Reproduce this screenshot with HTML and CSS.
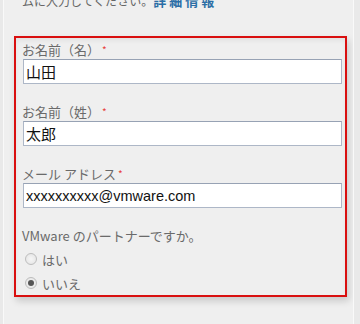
FILE: index.html
```html
<html><head>
  <title>パートナー登録</title>
  <link rel="stylesheet" href="styles.css">
</head>
<body>
<div class="frame">
  <p class="intro">ムに入力してください。<a href="#" class="more">詳細情報</a></p>

  <form class="box">
    <div class="field">
      <label for="firstName">お名前（名）<span class="req">*</span></label>
      <input type="text" id="firstName" class="cjk" value="山田">
    </div>

    <div class="field">
      <label for="lastName">お名前（姓）<span class="req">*</span></label>
      <input type="text" id="lastName" class="cjk" value="太郎">
    </div>

    <div class="field">
      <label for="email">メール アドレス<span class="req">*</span></label>
      <input type="text" id="email" class="mail" value="xxxxxxxxxx@vmware.com">
    </div>

    <div class="question">VMware のパートナーですか。</div>
    <label class="choice"><input type="radio" name="partner" value="yes"> はい</label>
    <label class="choice"><input type="radio" name="partner" value="no" checked> いいえ</label>
  </form>
</div>
</body></html>
```

FILE: styles.css
```css
body {
  margin: 0;
  background-color: #e9e9e9;
  font-family: "Noto Sans CJK JP", "Noto Sans", sans-serif;
  color: #6a6a6a;
}

.frame {
  margin-left: 3px;
  margin-right: 6px;
  min-height: 324px;
  background-color: #efefef;
  border-left: 1px solid #f9f9f9;
  border-right: 1px solid #f9f9f9;
  padding: 0 6px 0 10px;
  overflow: hidden;
}

.intro {
  margin: -7px 0 0 8px;
  font-size: 12px;
  line-height: 16px;
  color: #666;
  height: 43px;
}

.more {
  color: #2b6ea6;
  font-weight: bold;
  font-size: 13px;
  letter-spacing: 3px;
  text-decoration: none;
}

.box {
  margin: 0;
  border: 2px solid #d90f0f;
  padding: 3px 3px 0 7px;
  height: 261px;
  box-sizing: border-box;
  box-shadow: 2px 4px 7px rgba(0, 0, 0, 0.16), inset 0 3px 4px rgba(0, 0, 0, 0.05);
}

.field {
  display: flex;
  flex-direction: column;
  margin-bottom: 19px;
}

.field label {
  font-size: 13px;
  line-height: 18px;
  margin-left: -1px;
}

.req {
  color: #e8413c;
  font-size: 10px;
  vertical-align: top;
  margin-left: 2px;
}

.field input {
  height: 25px;
  box-sizing: border-box;
  border: 1px solid #adb7c7;
  border-top-color: #97a2b4;
  background: #fff;
  padding: 0 2px;
  color: #111;
  outline: none;
}

.cjk {
  font-family: "Noto Sans CJK JP", sans-serif;
  font-size: 15px;
}

.mail {
  font-family: "Liberation Sans", sans-serif;
  font-size: 14.5px;
}

.question {
  font-size: 13px;
  line-height: 18px;
  margin: 3px 0 3px -1px;
}

.choice {
  display: flex;
  align-items: center;
  gap: 5px;
  height: 22px;
  margin-bottom: 2px;
  font-size: 13px;
}

.choice input {
  appearance: none;
  width: 12px;
  height: 12px;
  margin: 0 0 0 2px;
  border: 1px solid #bdbdbd;
  border-radius: 50%;
  background: radial-gradient(circle, #f6f6f6 0, #e2e2e2 100%);
  display: grid;
  place-items: center;
}

.choice input:checked::after {
  content: '';
  width: 6px;
  height: 6px;
  border-radius: 50%;
  background: #555;
}
```
